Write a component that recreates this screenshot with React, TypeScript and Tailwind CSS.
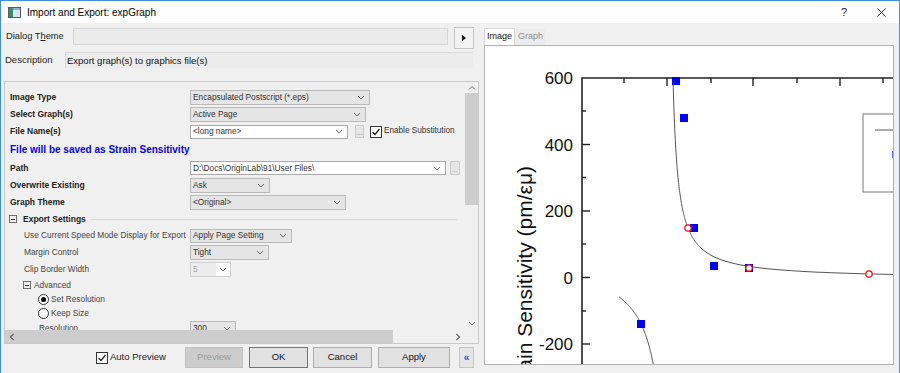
import React from 'react';

type Dir = 'down' | 'up' | 'left' | 'right';

function Chevron({ dir = 'down', className = '' }: { dir?: Dir; className?: string }) {
  if (dir === 'left' || dir === 'right') {
    return (
      <svg width="6" height="8" viewBox="0 0 6 8" className={className}>
        <path d={dir === 'left' ? 'M4.5 1 L1.5 4 L4.5 7' : 'M1.5 1 L4.5 4 L1.5 7'} fill="none" stroke="#606060" strokeWidth="1.2" />
      </svg>
    );
  }
  return (
    <svg width="8" height="5" viewBox="0 0 8 5" className={className}>
      <path d={dir === 'up' ? 'M1 4.5 L4 1.5 L7 4.5' : 'M1 1 L4 4 L7 1'} fill="none" stroke="#6a6a6a" strokeWidth="1" />
    </svg>
  );
}

function Check() {
  return (
    <div className="w-[12px] h-[12px] border border-[#333] bg-white flex items-center justify-center shrink-0">
      <svg width="10" height="10" viewBox="0 0 10 10">
        <path d="M1.5 5 L4 7.5 L8.5 2" fill="none" stroke="#222" strokeWidth="1.2" />
      </svg>
    </div>
  );
}

function Combo({ className, text, white, muted }: { className: string; text: string; white?: boolean; muted?: boolean }) {
  return (
    <div
      className={`${className} flex items-center justify-between border ${
        white ? 'bg-white border-[#a9a9a9]' : 'bg-[#e5e5e5] border-[#bababa]'
      }`}
    >
      <span className={`pl-[2px] text-[8.3px] leading-none whitespace-nowrap ${muted ? 'text-[#a3a3a3]' : 'text-[#333]'}`}>{text}</span>
      <Chevron className="mr-[4px] shrink-0" />
    </div>
  );
}

function Dots({ className }: { className: string }) {
  return (
    <div className={`${className} bg-[#e6e6e6] border border-[#cacaca] flex items-end justify-center text-[7px] leading-[8px] text-[#888]`}>
      ...
    </div>
  );
}

function Toggle() {
  return (
    <div className="w-[8px] h-[8px] border border-[#6f6f6f] flex items-center justify-center shrink-0">
      <div className="w-[4px] h-px bg-[#333]" />
    </div>
  );
}

function Radio({ on }: { on?: boolean }) {
  return (
    <div className="w-[11px] h-[11px] rounded-full border border-[#333] bg-white flex items-center justify-center shrink-0">
      {on && <div className="w-[5px] h-[5px] rounded-full bg-black" />}
    </div>
  );
}

function TitleBar() {
  return (
    <div className="h-[22px] bg-white flex items-center shrink-0">
      <svg width="13" height="11" viewBox="0 0 13 11" className="ml-[7px]">
        <rect x="0.5" y="0.5" width="12" height="10" fill="#d6e6f4" stroke="#5a5a5a" />
        <rect x="1" y="1" width="4" height="9" fill="#3d8a6c" />
        <rect x="5" y="1" width="7" height="2" fill="#7fb2e0" />
      </svg>
      <span className="ml-[6px] text-[10px] text-black">Import and Export: expGraph</span>
      <span className="ml-auto text-[11px] text-[#222]">?</span>
      <svg width="9" height="9" viewBox="0 0 9 9" className="ml-[30px] mr-[13px]">
        <path d="M0.5 0.5 L8.5 8.5 M8.5 0.5 L0.5 8.5" stroke="#222" strokeWidth="1" />
      </svg>
    </div>
  );
}

function Panel() {
  const top = 'pl-[5px] w-[185px] shrink-0 text-[8.5px] font-bold text-[#222] whitespace-nowrap';
  const sub = 'pl-[19px] w-[185px] shrink-0 text-[8.3px] text-[#444] whitespace-nowrap';
  return (
    <div className="mt-[13px] ml-[3px] w-[475px] h-[263px] border border-[#c9c9c9] flex flex-col">
      <div className="flex h-[248px]">
        <div className="w-[460px] overflow-hidden pt-[6px]">
          <div className="h-[18px] flex items-center">
            <div className={top}>Image Type</div>
            <Combo className="w-[180px] h-[15px]" text="Encapsulated Postscript (*.eps)" />
          </div>
          <div className="h-[17px] flex items-center">
            <div className={top}>Select Graph(s)</div>
            <Combo className="w-[176px] h-[15px]" text="Active Page" />
          </div>
          <div className="h-[17px] flex items-center">
            <div className={top}>File Name(s)</div>
            <Combo className="w-[158px] h-[14px]" text="<long name>" white />
            <Dots className="ml-[7px] w-[9px] h-[13px]" />
            <div className="ml-[6px]">
              <Check />
            </div>
            <span className="ml-[2px] text-[8.2px] text-[#333] whitespace-nowrap">Enable Substitution</span>
          </div>
          <div className="h-[19px] flex items-center pl-[5px] text-[10px] font-bold text-[#0000ff]">
            File will be saved as Strain Sensitivity
          </div>
          <div className="h-[18px] flex items-center">
            <div className={top}>Path</div>
            <Combo className="w-[256px] h-[14px]" text="D:\Docs\OriginLab\91\User Files\" white />
            <Dots className="ml-[4px] w-[10px] h-[14px]" />
          </div>
          <div className="h-[17px] flex items-center">
            <div className={top}>Overwrite Existing</div>
            <Combo className="w-[80px] h-[15px]" text="Ask" />
          </div>
          <div className="h-[17px] flex items-center">
            <div className={top}>Graph Theme</div>
            <Combo className="w-[156px] h-[15px]" text="<Original>" />
          </div>
          <div className="h-[16px] flex items-center pl-[4px] pr-[8px]">
            <Toggle />
            <span className="ml-[6px] text-[8.5px] font-bold text-[#222] whitespace-nowrap">Export Settings</span>
            <div className="flex-1 h-px bg-[#d9d9d9] ml-[5px]" />
          </div>
          <div className="h-[17px] flex items-center">
            <div className={sub}>Use Current Speed Mode Display for Export</div>
            <Combo className="w-[102px] h-[14px]" text="Apply Page Setting" />
          </div>
          <div className="h-[17px] flex items-center">
            <div className={sub}>Margin Control</div>
            <Combo className="w-[79px] h-[15px]" text="Tight" />
          </div>
          <div className="h-[17px] flex items-center">
            <div className={sub}>Clip Border Width</div>
            <div className="w-[41px] h-[15px] flex border border-[#cfcfcf]">
              <div className="flex-1 bg-[#ececec] text-[8.3px] leading-[13px] pl-[2px] text-[#a3a3a3]">5</div>
              <div className="w-[14px] bg-white flex items-center justify-center">
                <Chevron />
              </div>
            </div>
          </div>
          <div className="h-[14px] flex items-center pl-[18px]">
            <Toggle />
            <span className="ml-[3px] text-[8.3px] text-[#444]">Advanced</span>
          </div>
          <div className="h-[14px] flex items-center pl-[33px]">
            <Radio on />
            <span className="ml-[2px] text-[8.3px] text-[#444]">Set Resolution</span>
          </div>
          <div className="h-[14px] flex items-center pl-[33px]">
            <Radio />
            <span className="ml-[2px] text-[8.3px] text-[#444]">Keep Size</span>
          </div>
          <div className="h-[17px] flex items-center">
            <div className="pl-[34px] w-[185px] shrink-0 text-[8.3px] text-[#444]">Resolution</div>
            <Combo className="w-[46px] h-[15px]" text="300" />
          </div>
        </div>
        {/* vertical scrollbar */}
        <div className="w-[13px] flex flex-col bg-[#f0f0f0]">
          <div className="h-[11px] flex items-center justify-center">
            <Chevron dir="up" />
          </div>
          <div className="h-[112px] bg-[#cdcdcd]" />
          <div className="flex-1" />
          <div className="h-[13px] flex items-center justify-center">
            <Chevron dir="down" />
          </div>
        </div>
      </div>
      {/* horizontal scrollbar */}
      <div className="flex h-[13px]">
        <div className="w-[460px] flex bg-[#f0f0f0]">
          <div className="w-[388px] bg-[#cdcdcd] flex items-center pl-[4px]">
            <Chevron dir="left" />
          </div>
          <div className="flex-1" />
          <div className="w-[14px] flex items-center justify-center">
            <Chevron dir="right" />
          </div>
        </div>
        <div className="w-[13px] bg-[#f0f0f0]" />
      </div>
    </div>
  );
}

function LeftSide() {
  return (
    <div className="w-[478px] flex flex-col shrink-0">
      <div className="mt-[4px] h-[21px] flex items-start">
        <div className="w-[72px] pl-[5px] pt-[3px] text-[9.3px] text-[#222] whitespace-nowrap">
          Dialog T<span className="underline">h</span>eme
        </div>
        <div className="mt-[1px] w-[375px] h-[17px] bg-[#ebebeb] border border-[#d6d6d6]" />
        <div className="ml-[6px] w-[20px] h-[22px] bg-[#f3f3f3] border border-[#c6c6c6] flex items-center justify-center">
          <svg width="4" height="6" viewBox="0 0 4 6">
            <path d="M0 0 L4 3 L0 6 Z" fill="#111" />
          </svg>
        </div>
      </div>
      <div className="mt-[4px] h-[16px] flex items-center">
        <div className="w-[64px] pl-[4px] text-[9.5px] text-[#222]">Description</div>
        <div className="w-[408px] h-[16px] bg-[#ececec] border-t border-l border-[#d8d8d8] pl-[1px] text-[9.5px] leading-[15px] text-[#111]">
          Export graph(s) to graphics file(s)
        </div>
      </div>
      <Panel />
      <div className="mt-[3px] h-[21px] flex items-center">
        <div className="ml-[95px] w-[89px] flex items-center">
          <Check />
          <span className="ml-[2px] text-[9.5px] text-[#222]">Auto Preview</span>
        </div>
        <div className="w-[58px] h-[21px] bg-[#cccccc] border border-[#c2c2c2] flex items-center justify-center text-[9.5px] text-[#9a9a9a]">
          Preview
        </div>
        <div className="ml-[6px] w-[59px] h-[21px] bg-[#e1e1e1] border border-[#3d7fd0] flex items-center justify-center text-[9.5px] text-[#111]">
          OK
        </div>
        <div className="ml-[5px] w-[59px] h-[21px] bg-[#e1e1e1] border border-[#adadad] flex items-center justify-center text-[9.5px] text-[#111]">
          Cancel
        </div>
        <div className="ml-[6px] w-[72px] h-[21px] bg-[#e1e1e1] border border-[#adadad] flex items-center justify-center text-[9.5px] text-[#111]">
          Apply
        </div>
        <div className="ml-[9px] w-[15px] h-[21px] bg-[#e5e5e5] border border-[#c4c4c4] flex items-center justify-center text-[10px] font-bold text-[#3b3bff]">
          «
        </div>
      </div>
    </div>
  );
}

const SQUARES = [
  [676, 81],
  [684, 118],
  [694, 228],
  [714, 266],
  [749, 268],
  [641, 324],
];
const CIRCLES = [
  [688, 228],
  [749, 268],
  [869, 274],
];

function curves() {
  const right: string[] = [];
  for (let x = 673; x <= 895; x += x < 700 ? 0.25 : 2) {
    right.push(`${x},${(279 - 1025 / (x - 667.9)).toFixed(1)}`);
  }
  const left: string[] = [];
  for (let x = 619; x <= 657; x += 0.5) {
    left.push(`${x},${(257 + 2174 / (673.5 - x)).toFixed(1)}`);
  }
  return { right: right.join(' '), left: left.join(' ') };
}

function Plot() {
  const { right, left } = curves();
  const majors = [144.5, 211, 277.5, 344];
  const minors = [111, 177.5, 244, 311];
  const labels: [string, number][] = [
    ['600', 78],
    ['400', 144.5],
    ['200', 211],
    ['0', 277.5],
    ['-200', 344],
  ];
  const font = 'Liberation Sans, Arial, sans-serif';
  return (
    <svg width="408" height="318" viewBox="485 46 408 318" className="block">
      <rect x="485" y="46" width="408" height="318" fill="#fff" />
      {/* axes */}
      <line x1="582" y1="78" x2="895" y2="78" stroke="#222" strokeWidth="1.6" />
      <line x1="582" y1="77.2" x2="582" y2="370" stroke="#222" strokeWidth="1.6" />
      {[667, 753, 840].map((x) => (
        <line key={`tm${x}`} x1={x} y1="78" x2={x} y2="86" stroke="#222" strokeWidth="1.4" />
      ))}
      {[624, 711, 797, 883].map((x) => (
        <line key={`tn${x}`} x1={x} y1="78" x2={x} y2="83" stroke="#222" strokeWidth="1.4" />
      ))}
      {majors.map((y) => (
        <line key={`ym${y}`} x1="582" y1={y} x2="590" y2={y} stroke="#222" strokeWidth="1.4" />
      ))}
      {minors.map((y) => (
        <line key={`yn${y}`} x1="582" y1={y} x2="586" y2={y} stroke="#222" strokeWidth="1.4" />
      ))}
      {labels.map(([t, y]) => (
        <text key={t} x="573" y={y + 6} textAnchor="end" fontFamily={font} fontSize="17" fill="#111">
          {t}
        </text>
      ))}
      <text transform="translate(532,166) rotate(-90)" textAnchor="end" fontFamily={font} fontSize="21" fill="#111">
        Strain Sensitivity (pm/εμ)
      </text>
      {/* legend */}
      <rect x="863" y="114" width="40" height="78" fill="#fff" stroke="#777" strokeWidth="1" />
      <line x1="875" y1="130" x2="895" y2="130" stroke="#555" strokeWidth="1" />
      <rect x="892" y="151" width="3" height="7" fill="#6b6bff" />
      {/* fit curves */}
      <polyline points={right} fill="none" stroke="#555" strokeWidth="1" />
      <polyline points={left} fill="none" stroke="#555" strokeWidth="1" />
      {SQUARES.map(([x, y], i) => (
        <rect key={`s${i}`} x={x - 4} y={y - 4} width="8" height="8" fill="#0000ff" />
      ))}
      {CIRCLES.map(([x, y], i) => (
        <circle key={`c${i}`} cx={x} cy={y} r="3.2" fill="#fff" stroke="#ff0000" strokeWidth="1.2" />
      ))}
    </svg>
  );
}

function RightSide() {
  return (
    <div className="flex-1 flex flex-col pt-[5px]">
      <div className="ml-[5px] flex items-end h-[17px]">
        <div className="w-[31px] h-[17px] bg-white border-t border-x border-[#d9d9d9] pl-[2px] text-[9px] leading-[15px] text-[#111]">
          Image
        </div>
        <div className="w-[30px] h-[16px] bg-[#ececec] pl-[3px] text-[9px] leading-[15px] text-[#8c8c8c]">Graph</div>
      </div>
      <div className="ml-[5px] w-[410px] h-[320px] border border-[#b3b3b3] bg-white overflow-hidden">
        <Plot />
      </div>
    </div>
  );
}

export default function App() {
  return (
    <div className="w-[900px] h-[373px] overflow-hidden bg-[#f0f0f0] border-t border-x border-[#3e8fde] flex flex-col font-['Liberation_Sans',Arial,sans-serif] text-black">
      <TitleBar />
      <div className="flex flex-1 min-h-0">
        <LeftSide />
        <RightSide />
      </div>
    </div>
  );
}
